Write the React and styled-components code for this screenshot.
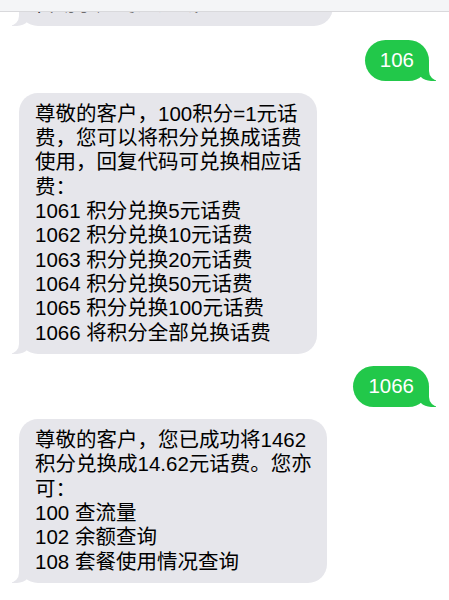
import React from "react";
import styled, { createGlobalStyle } from "styled-components";

const MESSAGES = [
  {
    id: 1,
    out: false,
    gap: 0,
    text: "请回复10086咨询，本条为系统\n自动手知的短短域",
  },
  { id: 2, out: true, gap: 14, text: "106" },
  {
    id: 3,
    out: false,
    gap: 12,
    text:
      "尊敬的客户，100积分=1元话\n费，您可以将积分兑换成话费\n使用，回复代码可兑换相应话\n费：\n1061 积分兑换5元话费\n1062 积分兑换10元话费\n1063 积分兑换20元话费\n1064 积分兑换50元话费\n1065 积分兑换100元话费\n1066 将积分全部兑换话费",
  },
  { id: 4, out: true, gap: 12, text: "1066" },
  {
    id: 5,
    out: false,
    gap: 12,
    text:
      "尊敬的客户，您已成功将1462\n积分兑换成14.62元话费。您亦\n可：\n100 查流量\n102 余额查询\n108 套餐使用情况查询",
  },
];

export default function App() {
  return (
    <>
      <GlobalStyle />
      <Screen>
        <TopBar />
        <Thread>
          {MESSAGES.map((msg) => (
            <Row key={msg.id} $out={msg.out} $gap={msg.gap}>
              <Bubble $out={msg.out}>{msg.text}</Bubble>
            </Row>
          ))}
        </Thread>
      </Screen>
    </>
  );
}

// Styled Components
const GlobalStyle = createGlobalStyle`
  html, body {
    margin: 0;
    padding: 0;
    background: #ffffff;
  }
  body {
    font-family: "Liberation Sans", "Noto Sans CJK SC", sans-serif;
  }
`;

const Screen = styled.div`
  position: relative;
  width: 449px;
  height: 600px;
  overflow: hidden;
  background: #ffffff;
`;

const TopBar = styled.div`
  position: absolute;
  top: 0;
  left: 0;
  right: 0;
  height: 11px;
  background: #f4f5f7;
  border-bottom: 1px solid #d9d9dc;
  z-index: 2;
`;

const Thread = styled.div`
  display: flex;
  flex-direction: column;
  margin-top: -41px;
  padding: 0 20px 0 19px;
`;

const Row = styled.div`
  display: flex;
  justify-content: ${(p) => (p.$out ? "flex-end" : "flex-start")};
  margin-top: ${(p) => p.$gap}px;
`;

const Bubble = styled.div`
  position: relative;
  white-space: pre;
  font-size: 20.5px;
  line-height: 24.3px;
  color: ${(p) => (p.$out ? "#ffffff" : "#000000")};
  background: ${(p) => (p.$out ? "#22c84a" : "#e6e6eb")};
  padding: ${(p) => (p.$out ? "8.5px 15px 8.5px 15px" : "9px 15px 9px 16px")};
  border-radius: ${(p) => (p.$out ? "21px" : "19px")};

  &::before {
    content: "";
    position: absolute;
    bottom: 0;
    ${(p) => (p.$out ? "right: -7px;" : "left: -7px;")}
    width: 20px;
    height: 20px;
    background: ${(p) => (p.$out ? "#22c84a" : "#e6e6eb")};
    ${(p) =>
      p.$out
        ? "border-bottom-left-radius: 15px;"
        : "border-bottom-right-radius: 15px;"}
  }

  &::after {
    content: "";
    position: absolute;
    bottom: 0;
    ${(p) => (p.$out ? "right: -26px;" : "left: -26px;")}
    width: 26px;
    height: 20px;
    background: #ffffff;
    ${(p) =>
      p.$out
        ? "border-bottom-left-radius: 10px;"
        : "border-bottom-right-radius: 10px;"}
  }
`;
